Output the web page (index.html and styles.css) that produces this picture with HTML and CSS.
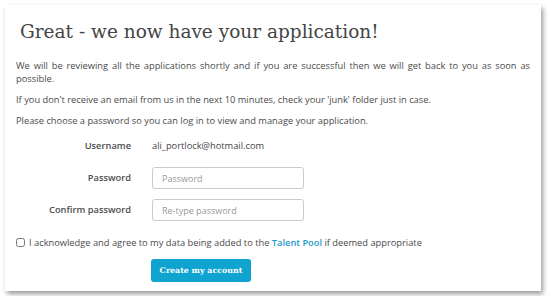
FILE: index.html
```html
<!DOCTYPE html>
<html lang="en">
<head>
  <meta charset="UTF-8">
  <title>Application received</title>
  <link rel="stylesheet" href="styles.css">
</head>
<body>
  <div class="card">
    <h1>Great - we now have your application!</h1>
    <p>We will be reviewing all the applications shortly and if you are successful then we will get back to you as soon as possible.</p>
    <p>If you don't receive an email from us in the next 10 minutes, check your 'junk' folder just in case.</p>
    <p>Please choose a password so you can log in to view and manage your application.</p>

    <form class="account-form">
      <label class="field-label">Username</label>
      <span class="field-value">ali_portlock@hotmail.com</span>

      <label class="field-label" for="password">Password</label>
      <input class="field-input" type="password" id="password" placeholder="Password">

      <label class="field-label" for="confirm">Confirm password</label>
      <input class="field-input" type="password" id="confirm" placeholder="Re-type password">
    </form>

    <label class="agree">
      <input type="checkbox">
      <span>I acknowledge and agree to my data being added to the <a href="#">Talent Pool</a> if deemed appropriate</span>
    </label>

    <div class="actions">
      <button type="button">Create my account</button>
    </div>
  </div>
</body>
</html>
```

FILE: styles.css
```css
body {
  margin: 0;
  padding: 5px;
  background: #fff;
  font-family: 'Open Sans', sans-serif;
  color: #4a4a4a;
}
.card {
  width: 536px;
  height: 286px;
  box-sizing: border-box;
  padding: 0 11px;
  background: #fff;
  box-shadow: 2px 3px 5px rgba(0, 0, 0, 0.4);
}
h1 {
  margin: 0;
  padding: 11px 0 0 4px;
  font-family: 'DejaVu Serif', serif;
  font-weight: normal;
  font-size: 18.5px;
  line-height: 32px;
  color: #444;
}
p {
  margin: 0 0 8px;
  font-size: 9.3px;
  line-height: 13px;
  text-align: justify;
}
.card h1 + p {
  margin-top: 11px;
}
.account-form {
  display: grid;
  grid-template-columns: 115px 152px;
  column-gap: 21px;
  row-gap: 10px;
  align-items: center;
  justify-items: start;
  margin-top: 2px;
  font-size: 9.3px;
}
.field-label {
  justify-self: end;
  font-weight: 600;
  color: #4d4d4d;
  line-height: 22px;
}
.field-value {
  line-height: 22px;
  color: #444;
}
.field-input {
  width: 152px;
  height: 22px;
  box-sizing: border-box;
  border: 1px solid #ccc;
  border-radius: 3px;
  padding: 0 9px;
  font-family: 'Open Sans', sans-serif;
  font-size: 9px;
  color: #555;
}
.field-input::placeholder {
  color: #999;
}
.agree {
  display: flex;
  align-items: center;
  gap: 4px;
  margin-top: 15px;
  font-size: 9.3px;
}
.agree input {
  margin: 0;
  width: 9px;
  height: 9px;
}
.agree a {
  color: #1b9ccc;
  font-weight: 600;
  text-decoration: none;
}
.actions {
  padding-left: 135px;
  margin-top: 7px;
}
button {
  width: 100px;
  height: 23px;
  padding: 0;
  border: none;
  border-radius: 3px;
  background: #0ea4cf;
  color: #fff;
  font-family: 'DejaVu Serif', serif;
  font-weight: bold;
  font-size: 7.9px;
  cursor: pointer;
}
```
